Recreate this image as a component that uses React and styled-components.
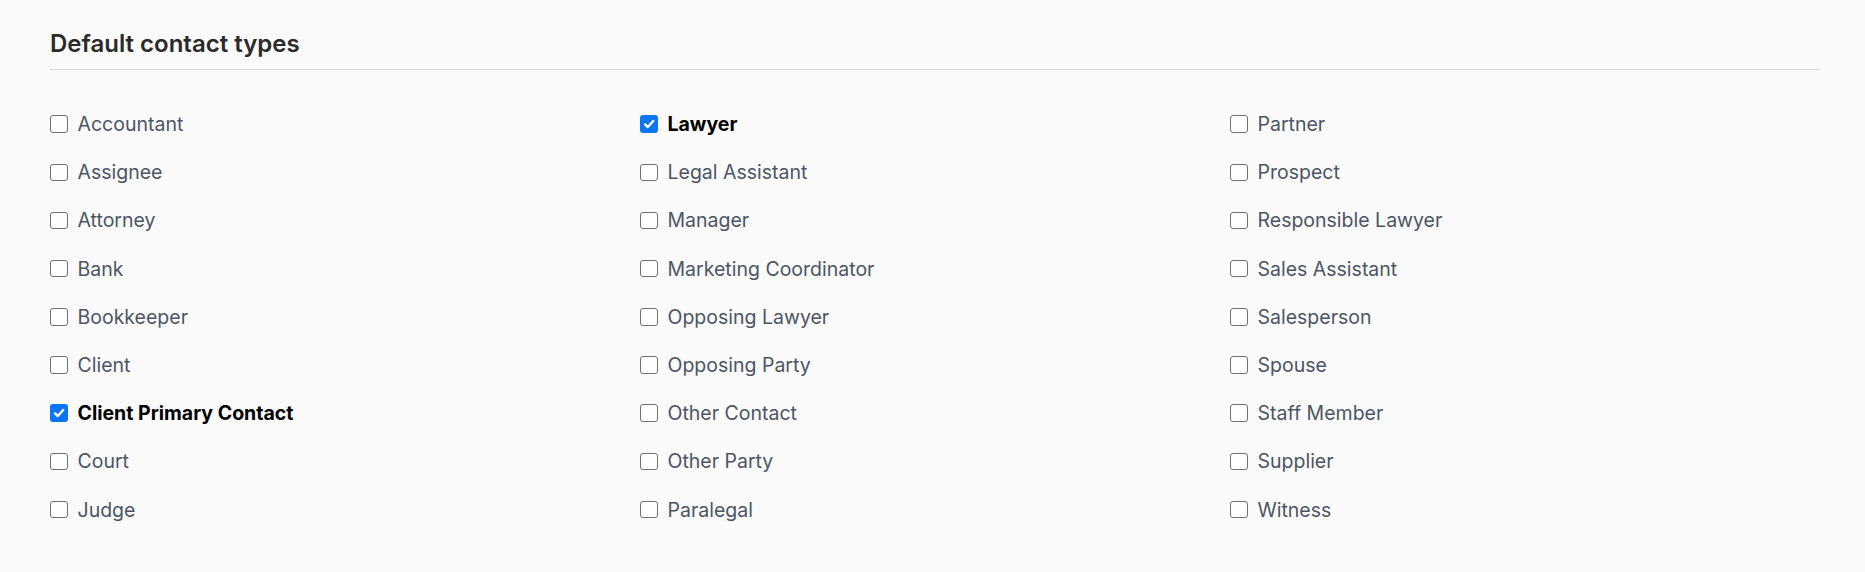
import React, { useState } from "react";
import styled, { createGlobalStyle } from "styled-components";

const Global = createGlobalStyle`
  html, body { margin: 0; padding: 0; background: #fafafa; }
  body { font-family: Inter, "Noto Sans", sans-serif; -webkit-font-smoothing: antialiased; }
`;

const Page = styled.div`
  padding: 29px 45px 40px 50px;
  background: #fafafa;
  min-height: 572px;
  box-sizing: border-box;
`;

const Heading = styled.h2`
  margin: 0;
  font-size: 24px;
  line-height: 29px;
  font-weight: 600;
  color: #2a2a2a;
  padding-bottom: 11px;
  border-bottom: 1px solid #d3d9da;
`;

const Grid = styled.div`
  margin-top: 30px;
  display: grid;
  grid-template-columns: repeat(3, 1fr);
  grid-template-rows: repeat(9, 48.2px);
  grid-auto-flow: column;
`;

const Item = styled.label`
  display: flex;
  align-items: center;
  gap: 10px;
  cursor: pointer;
  font-size: 19.5px;
  color: ${(p) => (p.$checked ? "#000" : "#4b5565")};
  font-weight: ${(p) => (p.$checked ? 700 : 400)};
`;

const Box = styled.span`
  width: 17.5px;
  height: 17.5px;
  box-sizing: border-box;
  border-radius: 3px;
  flex: none;
  display: flex;
  align-items: center;
  justify-content: center;
  border: ${(p) => (p.$checked ? "none" : "1.6px solid #707070")};
  background: ${(p) => (p.$checked ? "#0b75f5" : "#fff")};
`;

const types = [
  "Accountant", "Assignee", "Attorney", "Bank", "Bookkeeper", "Client",
  "Client Primary Contact", "Court", "Judge",
  "Lawyer", "Legal Assistant", "Manager", "Marketing Coordinator",
  "Opposing Lawyer", "Opposing Party", "Other Contact", "Other Party", "Paralegal",
  "Partner", "Prospect", "Responsible Lawyer", "Sales Assistant", "Salesperson",
  "Spouse", "Staff Member", "Supplier", "Witness",
];

export default function App() {
  const [checked, setChecked] = useState({ "Client Primary Contact": true, Lawyer: true });
  return (
    <>
      <Global />
      <Page>
        <Heading>Default contact types</Heading>
        <Grid>
          {types.map((t) => {
            const c = !!checked[t];
            return (
              <Item key={t} $checked={c} onClick={() => setChecked({ ...checked, [t]: !c })}>
                <Box $checked={c}>
                  {c && (
                    <svg width="14" height="14" viewBox="0 0 14 14">
                      <path d="M3 7.4 L5.8 10 L11.2 4" fill="none" stroke="#fff" strokeWidth="2.4" strokeLinecap="round" strokeLinejoin="round" />
                    </svg>
                  )}
                </Box>
                {t}
              </Item>
            );
          })}
        </Grid>
      </Page>
    </>
  );
}
